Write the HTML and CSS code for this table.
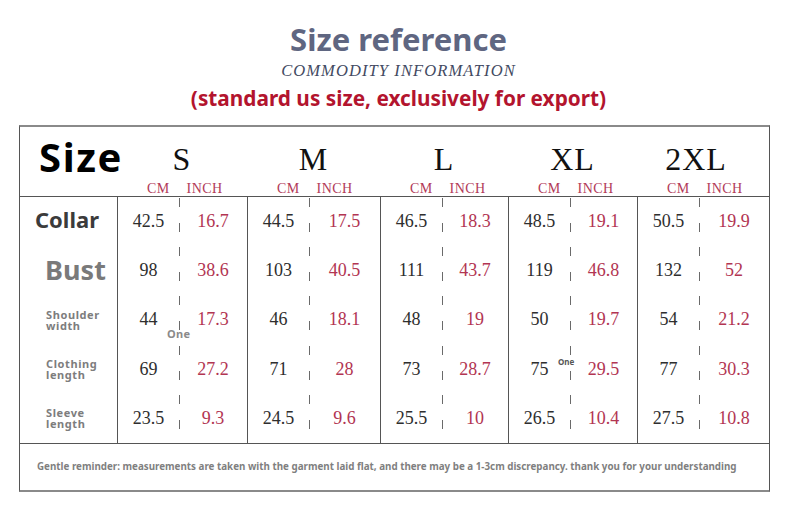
FILE: index.html
```html
<!DOCTYPE html>
<html lang="en">
<head>
<meta charset="utf-8">
<title>Size reference</title>
<link rel="stylesheet" href="styles.css">
</head>
<body>
<div class="page">
  <header class="titles">
    <h1 class="title">Size reference</h1>
    <p class="subtitle">COMMODITY INFORMATION</p>
    <p class="note">(standard us size, exclusively for export)</p>
  </header>

  <div class="chart">
    <div class="grid head">
      <div class="label-cell"><span class="size-word">Size</span></div>
      <div class="hcol"><div class="sz">S</div><div class="units"><span>CM</span><span>INCH</span></div></div>
      <div class="hcol"><div class="sz">M</div><div class="units"><span>CM</span><span>INCH</span></div></div>
      <div class="hcol"><div class="sz">L</div><div class="units"><span>CM</span><span>INCH</span></div></div>
      <div class="hcol"><div class="sz">XL</div><div class="units"><span>CM</span><span>INCH</span></div></div>
      <div class="hcol"><div class="sz sz-2xl">2XL</div><div class="units"><span>CM</span><span>INCH</span></div></div>
    </div>

    <div class="grid body">
      <div class="rl rl-collar">Collar</div>
      <div class="dc"><span class="cm">42.5</span><span class="in">16.7</span></div>
      <div class="dc"><span class="cm">44.5</span><span class="in">17.5</span></div>
      <div class="dc"><span class="cm">46.5</span><span class="in">18.3</span></div>
      <div class="dc"><span class="cm">48.5</span><span class="in">19.1</span></div>
      <div class="dc"><span class="cm">50.5</span><span class="in">19.9</span></div>

      <div class="rl rl-bust">Bust</div>
      <div class="dc"><span class="cm">98</span><span class="in">38.6</span></div>
      <div class="dc"><span class="cm">103</span><span class="in">40.5</span></div>
      <div class="dc"><span class="cm">111</span><span class="in">43.7</span></div>
      <div class="dc"><span class="cm">119</span><span class="in">46.8</span></div>
      <div class="dc"><span class="cm">132</span><span class="in">52</span></div>

      <div class="rl rl-small"><span>Shoulder</span><span>width</span></div>
      <div class="dc"><span class="cm">44</span><span class="in">17.3</span></div>
      <div class="dc"><span class="cm">46</span><span class="in">18.1</span></div>
      <div class="dc"><span class="cm">48</span><span class="in">19</span></div>
      <div class="dc"><span class="cm">50</span><span class="in">19.7</span></div>
      <div class="dc"><span class="cm">54</span><span class="in">21.2</span></div>

      <div class="rl rl-small"><span>Clothing</span><span>length</span></div>
      <div class="dc"><span class="cm">69</span><span class="in">27.2</span></div>
      <div class="dc"><span class="cm">71</span><span class="in">28</span></div>
      <div class="dc"><span class="cm">73</span><span class="in">28.7</span></div>
      <div class="dc"><span class="cm">75</span><span class="in">29.5</span></div>
      <div class="dc"><span class="cm">77</span><span class="in">30.3</span></div>

      <div class="rl rl-small"><span>Sleeve</span><span>length</span></div>
      <div class="dc"><span class="cm">23.5</span><span class="in">9.3</span></div>
      <div class="dc"><span class="cm">24.5</span><span class="in">9.6</span></div>
      <div class="dc"><span class="cm">25.5</span><span class="in">10</span></div>
      <div class="dc"><span class="cm">26.5</span><span class="in">10.4</span></div>
      <div class="dc"><span class="cm">27.5</span><span class="in">10.8</span></div>
    </div>

    <div class="foot">Gentle reminder: measurements are taken with the garment laid flat, and there may be a 1-3cm discrepancy. thank you for your understanding</div>

    <span class="stray stray-a">One</span>
    <span class="stray stray-b">One</span>
  </div>
</div>
</body>
</html>
```

FILE: styles.css
```css
html, body {
  margin: 0;
  padding: 0;
  background: #ffffff;
}

.page {
  width: 790px;
  height: 507px;
  padding-top: 24px;
  box-sizing: border-box;
  font-family: "Noto Sans", "Open Sans", sans-serif;
}

.titles {
  display: flex;
  flex-direction: column;
  align-items: center;
  padding-left: 7px;
}

.title {
  margin: 0;
  font-size: 31px;
  line-height: 31px;
  font-weight: 700;
  color: #5f6681;
}

.subtitle {
  margin: 8px 0 0;
  font-family: "Liberation Serif", serif;
  font-style: italic;
  font-size: 16.5px;
  line-height: 16px;
  letter-spacing: 1.1px;
  color: #434a62;
}

.note {
  margin: 9px 0 0;
  font-size: 20.8px;
  line-height: 20px;
  font-weight: 700;
  color: #b3142e;
}

.chart {
  position: relative;
  margin: 17px 0 0 19px;
  width: 751px;
  box-sizing: border-box;
  border-left: 1px solid #555;
  border-right: 1px solid #555;
  border-top: 2px solid #8a8a8a;
  border-bottom: 2px solid #8a8a8a;
}

.grid {
  display: grid;
  grid-template-columns: 97px 130px 133px 128px 129px 132px;
}

.head {
  height: 69px;
  border-bottom: 1px solid #555;
}

.label-cell {
  position: relative;
}

.size-word {
  position: absolute;
  left: 19px;
  top: 10px;
  font-size: 40px;
  line-height: 40px;
  font-weight: 700;
  letter-spacing: 1.6px;
  color: #000;
}

.hcol {
  display: flex;
  flex-direction: column;
  align-items: stretch;
  padding-top: 16px;
  font-family: "Liberation Serif", serif;
}

.sz {
  text-align: center;
  font-size: 32px;
  line-height: 32px;
  color: #111;
  letter-spacing: 1px;
}

.sz-2xl {
  padding-right: 14px;
}

.units {
  margin-top: 7px;
  display: flex;
  gap: 17px;
  padding-left: 30px;
  font-size: 14px;
  line-height: 14px;
  color: #b23a58;
  letter-spacing: 0.4px;
}

.body {
  grid-auto-rows: 49.2px;
}

.rl {
  display: flex;
  align-items: center;
  font-weight: 700;
}

.rl-collar {
  justify-content: center;
  padding-right: 3px;
  padding-bottom: 5px;
  font-size: 22px;
  color: #3b3b3b;
}

.rl-bust {
  justify-content: center;
  padding-left: 14px;
  padding-bottom: 3px;
  font-size: 27px;
  color: #7a7a7a;
}

.rl-small {
  flex-direction: column;
  align-items: flex-start;
  justify-content: center;
  padding-left: 26px;
  font-size: 11px;
  line-height: 11px;
  letter-spacing: 0.6px;
  color: #7d7d7d;
}

.rl-small span {
  display: block;
  height: 11px;
  overflow: visible;
}

.dc {
  display: grid;
  grid-template-columns: 61px 1fr;
  align-items: center;
  border-left: 1px solid #555;
  font-family: "Liberation Serif", serif;
  font-size: 18px;
  background-image: repeating-linear-gradient(to bottom, #6a6a6a 0 9px, transparent 9px 25px);
  background-size: 1px 100%;
  background-position: 61px 1px;
  background-repeat: no-repeat;
}

.dc .cm {
  text-align: center;
  color: #2e2e2e;
}

.dc .in {
  text-align: center;
  color: #b23552;
}

.foot {
  height: 46px;
  border-top: 1px solid #555;
  display: flex;
  align-items: center;
  padding-left: 17px;
  font-size: 9.8px;
  font-weight: 700;
  color: #7f7f7f;
  white-space: nowrap;
}

.stray {
  position: absolute;
  font-weight: 700;
}

.stray-a {
  left: 147px;
  top: 199px;
  font-size: 11px;
  color: #8a8a8a;
  letter-spacing: 0.3px;
}

.stray-b {
  left: 538px;
  top: 229px;
  font-size: 8px;
  color: #555;
}
```
